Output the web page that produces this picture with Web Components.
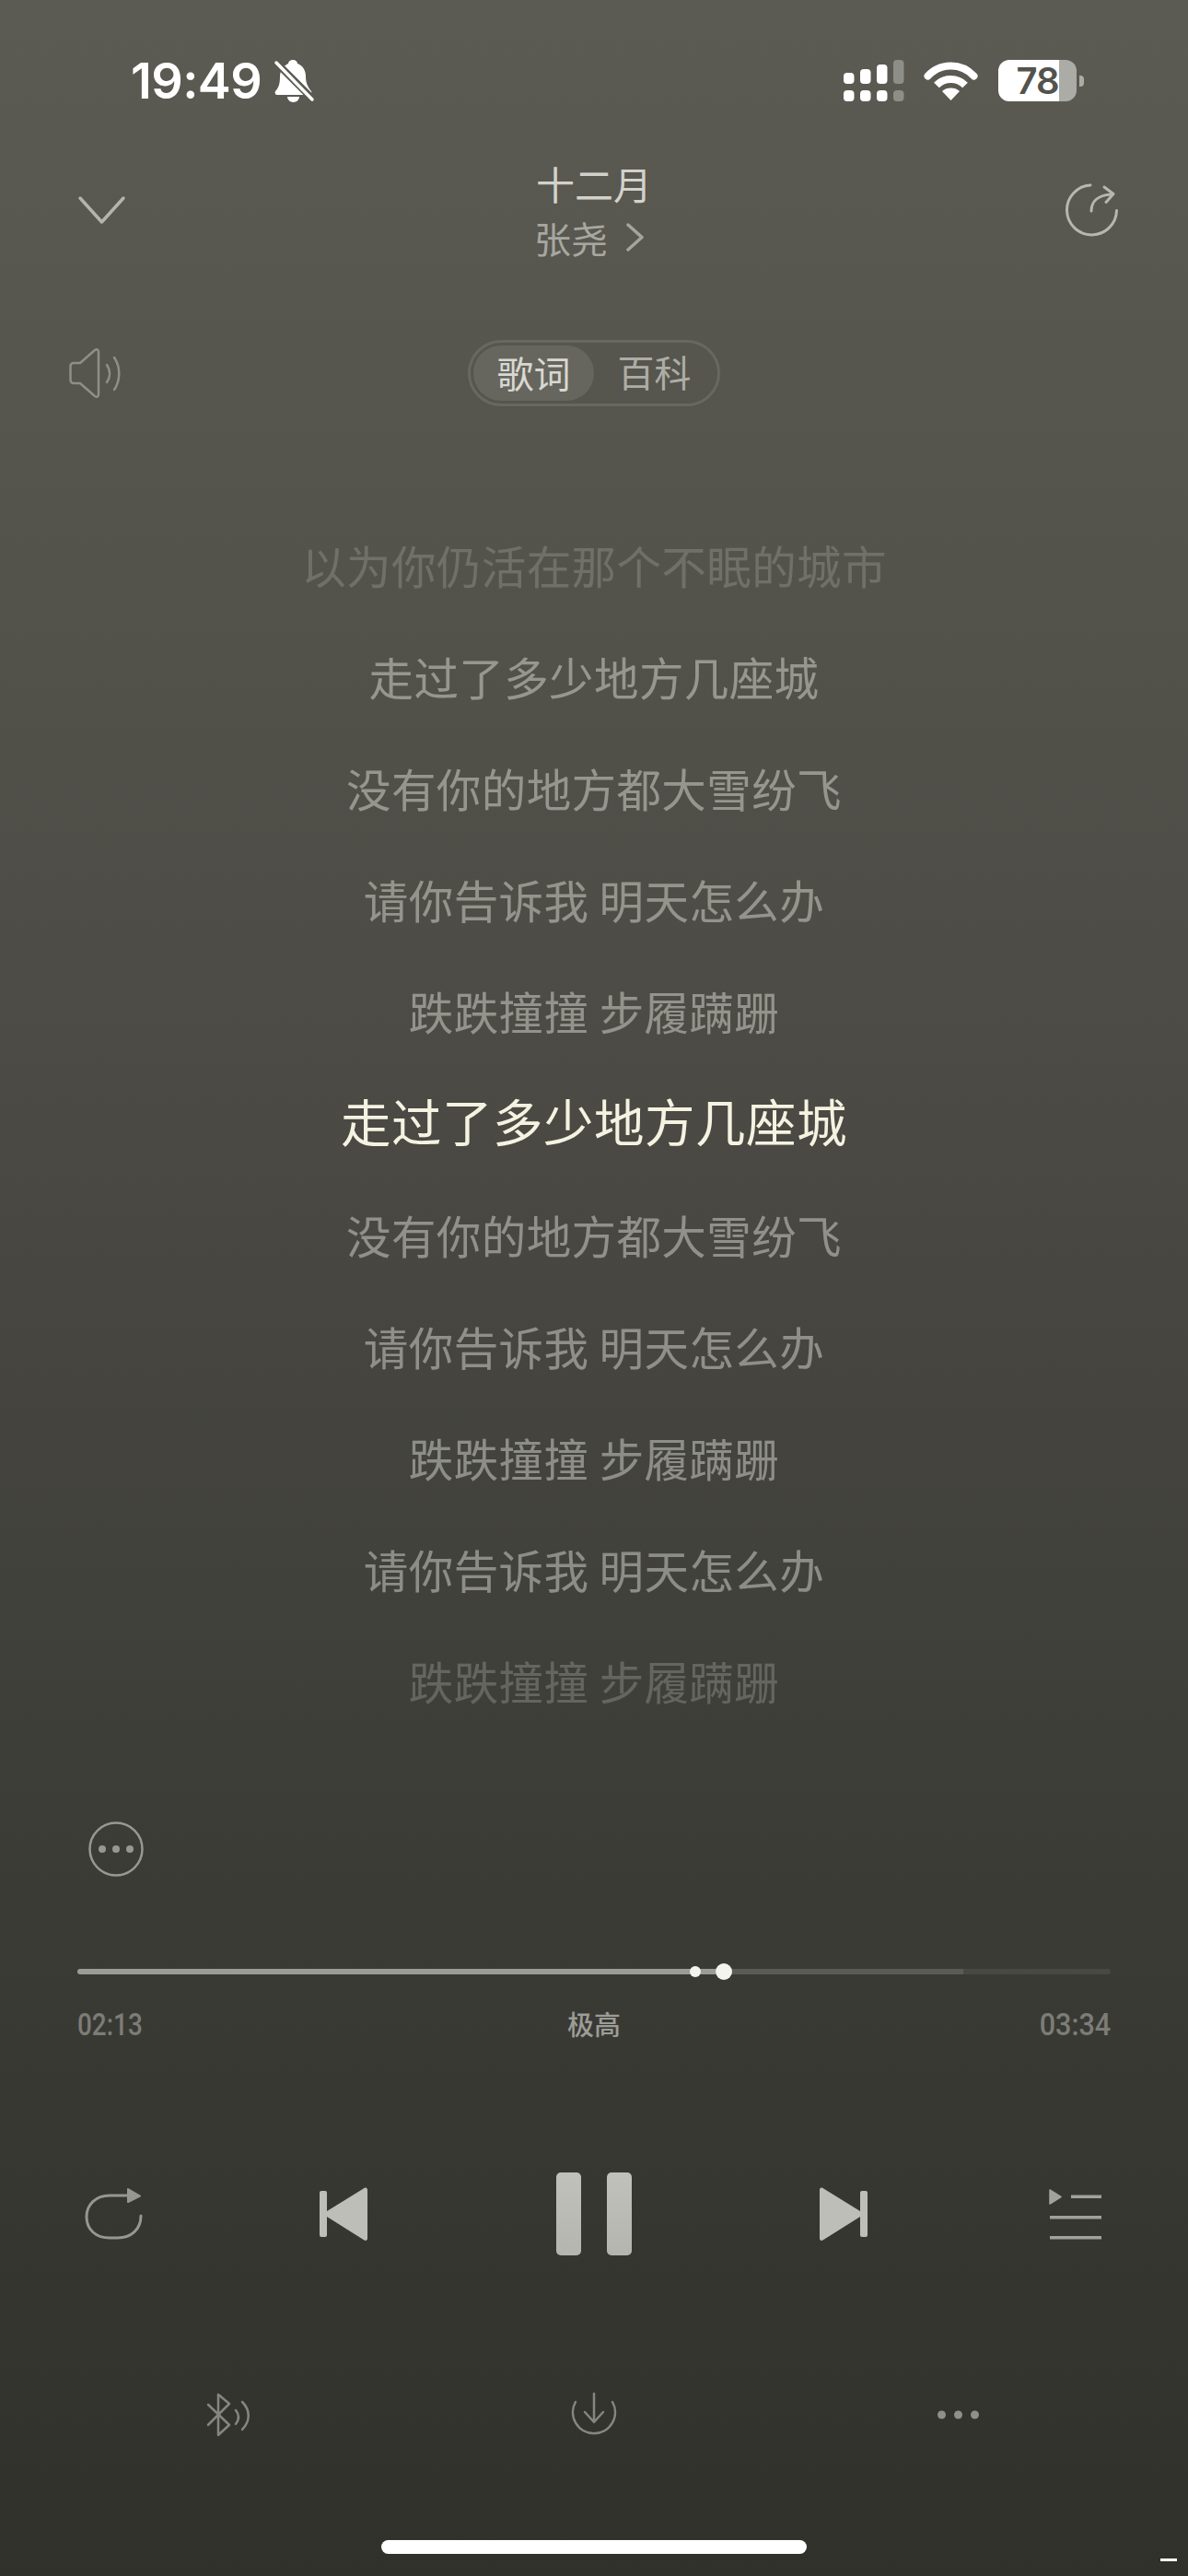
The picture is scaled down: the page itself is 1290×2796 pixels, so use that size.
<!doctype html>
<html lang="zh-CN">
  <head>
    <meta charset="UTF-8" />
    <meta name="viewport" content="width=device-width, initial-scale=1.0" />
    <title>十二月</title>
    <style>
      html, body { margin: 0; padding: 0; background: #31312c; }
    </style>
  </head>
  <body>

    <player-screen>
      <status-bar time="19:49" battery="78"></status-bar>
      <player-header title="十二月" artist="张尧"></player-header>
      <mode-switch></mode-switch>
      <lyric-list>
        <lyric-line tone="dim">以为你仍活在那个不眠的城市</lyric-line>
        <lyric-line>走过了多少地方几座城</lyric-line>
        <lyric-line>没有你的地方都大雪纷飞</lyric-line>
        <lyric-line>请你告诉我 明天怎么办</lyric-line>
        <lyric-line>跌跌撞撞 步履蹒跚</lyric-line>
        <lyric-line tone="active">走过了多少地方几座城</lyric-line>
        <lyric-line>没有你的地方都大雪纷飞</lyric-line>
        <lyric-line>请你告诉我 明天怎么办</lyric-line>
        <lyric-line>跌跌撞撞 步履蹒跚</lyric-line>
        <lyric-line>请你告诉我 明天怎么办</lyric-line>
        <lyric-line tone="faint">跌跌撞撞 步履蹒跚</lyric-line>
      </lyric-list>
      <more-button></more-button>
      <progress-bar current="02:13" total="03:34" quality="极高"></progress-bar>
      <transport-controls></transport-controls>
      <extra-actions></extra-actions>
      <home-indicator></home-indicator>
    </player-screen>

    <script>
      const CJK = '"Noto Sans CJK SC", "Noto Sans", sans-serif';

      // Inline svg paths, drawn at the size they have in the screenshot
      const ICONS = {
        bell: { w: 42, h: 46, svg: `
          <path fill="#fff" d="M20 0c3 0 5 2 5 4 6 2 9 8 9 14 0 7 2 11 6 16 1 2 0 4-2 4H3c-2 0-3-2-2-4 4-4 5-9 5-16 0-6 4-12 9-14 0-2 2-4 5-4z"/>
          <path fill="#fff" d="M14 40h13c0 3-3 6-6.500 6S14 43 14 40z"/>
          <path stroke="#5b5a52" stroke-width="8" d="M1 2l41 41"/>
          <path stroke="#fff" stroke-width="3.500" stroke-linecap="round" d="M2 3l39 40"/>` },
        signal: { w: 65, h: 45, svg: `
          <g fill="#fff">
            <rect x="0" y="14" width="11.500" height="12" rx="4"/>
            <rect x="18" y="10" width="11.500" height="16" rx="4"/>
            <rect x="36" y="5" width="11.500" height="21" rx="4"/>
            <rect x="0" y="33" width="11.500" height="12" rx="4"/>
            <rect x="18" y="33" width="11.500" height="12" rx="4"/>
            <rect x="36" y="33" width="11.500" height="12" rx="4"/>
          </g>
          <g fill="#8e8e88">
            <rect x="54" y="0" width="11.500" height="26" rx="4"/>
            <rect x="54" y="33" width="11.500" height="12" rx="4"/>
          </g>` },
        wifi: { w: 57, h: 42, svg: `
          <g fill="none" stroke="#fff" stroke-width="8" stroke-linecap="round">
            <path d="M3.500 15.500C10 8.500 19 4.500 28.500 4.500S47 8.500 53.500 15.500"/>
          </g>
          <path fill="none" stroke="#fff" stroke-width="8" d="M13 25.500C17 21.500 22.500 19 28.500 19S40 21.500 44 25.500"/>
          <path fill="#fff" d="M28.500 42L19 32c2.500-2.500 6-3.500 9.500-3.500s7 1 9.500 3.500z"/>` },
        chevronDown: { w: 51, h: 30, svg: `
          <path fill="none" stroke="#b4b4ad" stroke-width="3.500" stroke-linecap="round" stroke-linejoin="round" d="M2 2l23.500 26L49 2"/>` },
        chevronRight: { w: 19, h: 31, svg: `
          <path fill="none" stroke="#a5a59e" stroke-width="3.500" stroke-linecap="round" stroke-linejoin="round" d="M2 2l15 13.500L2 29"/>` },
        replay: { w: 58, h: 58, svg: `
          <g fill="none" stroke="#b7b7b0" stroke-width="3" stroke-linecap="round" stroke-linejoin="round">
            <path d="M28 2A27 27 0 1 0 56.500 29.500"/>
            <path d="M29 30C29 20 36 13 50 12"/>
            <path d="M43 4l10 7.500-8 9"/>
          </g>` },
        speaker: { w: 56, h: 54, svg: `
          <g fill="none" stroke="#8f8f88" stroke-width="2.500" stroke-linecap="round" stroke-linejoin="round">
            <path d="M5 16h7L28 2c2-1.500 4-1 4 2v46c0 3-2 3.500-4 2L12 38H5c-2 0-3.500-1.500-3.500-3.500V19.500C1.500 17.500 3 16 5 16z"/>
            <path d="M41 18c4 6 4 13 0 19"/>
            <path d="M49 10c7 10 7 25 0 35"/>
          </g>` },
        more: { w: 60, h: 60, svg: `
          <circle cx="30" cy="30" r="28.500" fill="none" stroke="#979892" stroke-width="2.500"/>
          <g fill="#979892"><circle cx="15" cy="30" r="4"/><circle cx="30" cy="30" r="4"/><circle cx="45" cy="30" r="4"/></g>` },
        repeat: { w: 62, h: 56, svg: `
          <path fill="none" stroke="#969791" stroke-width="3" stroke-linecap="round" d="M47 8H27C12 8 2 18 2 31c0 14 10 23 25 23h9c14 0 25-9 25-24"/>
          <path fill="#969791" stroke="#969791" stroke-width="2" stroke-linejoin="round" d="M47 1l13 7.500L47 15z"/>` },
        prev: { w: 52, h: 58, svg: `
          <g fill="#bdbeb8">
            <rect x="0" y="4" width="8" height="50" rx="2"/>
            <path d="M48.500 1L8 26c-2.500 1.500-2.500 4.500 0 6l40.500 25.500c2 1 3.500 0 3.500-2V3c0-2-1.500-3-3.500-2z"/>
          </g>` },
        next: { w: 52, h: 58, svg: `
          <g fill="#bdbeb8" transform="matrix(-1 0 0 1 52 0)">
            <rect x="0" y="4" width="8" height="50" rx="2"/>
            <path d="M48.500 1L8 26c-2.500 1.500-2.500 4.500 0 6l40.500 25.500c2 1 3.500 0 3.500-2V3c0-2-1.500-3-3.500-2z"/>
          </g>` },
        pause: { w: 82, h: 90, svg: `
          <defs><linearGradient id="p" x1="0" y1="0" x2="0" y2="1"><stop offset="0" stop-color="#c0c1bb"/><stop offset="1" stop-color="#b4b5af"/></linearGradient></defs>
          <rect x="0" y="0" width="27" height="90" rx="5" fill="url(#p)"/>
          <rect x="55" y="0" width="27" height="90" rx="5" fill="url(#p)"/>` },
        queue: { w: 57, h: 55, svg: `
          <path fill="#a1a29c" stroke="#a1a29c" stroke-width="1.500" stroke-linejoin="round" d="M1 1l12 7.500L1 16z"/>
          <g fill="#a1a29c">
            <rect x="24" y="6.500" width="33" height="3.500"/>
            <rect x="1" y="29" width="56" height="3.500"/>
            <rect x="1" y="51" width="56" height="3.500"/>
          </g>` },
        bluetooth: { w: 46, h: 46, svg: `
          <g fill="none" stroke="#85867f" stroke-width="2.500" stroke-linecap="round" stroke-linejoin="round">
            <path d="M1 12l23 22-12 11V1l12 10L1 34"/>
            <path d="M31 18c4 5 4 10 0 15"/>
            <path d="M38 9c9 9 9 21 0 30"/>
          </g>` },
        download: { w: 50, h: 47, svg: `
          <g fill="none" stroke="#85867f" stroke-width="2.500" stroke-linecap="round" stroke-linejoin="round">
            <path d="M5 10a23 23 0 1 0 40 0"/>
            <path d="M25 1v31M15 21l10 11 10-11"/>
          </g>` },
        dots: { w: 45, h: 10, svg: `
          <g fill="#8f908a"><circle cx="4.500" cy="5" r="4.500"/><circle cx="22.500" cy="5" r="4.500"/><circle cx="40.500" cy="5" r="4.500"/></g>` },
      };

      class AppIcon extends HTMLElement {
        connectedCallback() {
          const icon = ICONS[this.getAttribute('name')];
          const shadow = this.attachShadow({ mode: 'open' });
          shadow.innerHTML = `
            <style>
              :host { display: block; flex: none; line-height: 0; }
              svg { display: block; overflow: visible; }
            </style>
            <svg xmlns="http://www.w3.org/2000/svg" width="${icon.w}" height="${icon.h}" viewBox="0 0 ${icon.w} ${icon.h}">${icon.svg}</svg>`;
        }
      }
      customElements.define('app-icon', AppIcon);

      class PlayerScreen extends HTMLElement {
        constructor() {
          super();
          const shadow = this.attachShadow({ mode: 'open' });
          shadow.innerHTML = `
            <style>
              :host {
                display: flex;
                flex-direction: column;
                position: relative;
                width: 1290px;
                height: 2796px;
                overflow: hidden;
                background: linear-gradient(180deg, #5c5b53 0%, #4c4b45 40%, #3c3c37 72%, #31312c 100%);
                font-family: ${CJK};
              }
              .mark {
                position: absolute;
                right: 12px;
                bottom: 16px;
                width: 18px;
                height: 3px;
                background: #fff;
              }
            </style>
            <slot></slot>
            <div class="mark"></div>`;
        }
      }
      customElements.define('player-screen', PlayerScreen);

      class StatusBar extends HTMLElement {
        connectedCallback() {
          const shadow = this.attachShadow({ mode: 'open' });
          shadow.innerHTML = `
            <style>
              :host {
                display: flex;
                align-items: center;
                height: 47px;
                margin-top: 64px;
                padding: 0 113px 0 142px;
              }
              .time {
                font: 600 54px/47px Inter, "Liberation Sans", sans-serif;
                color: #fff;
                letter-spacing: -0.6px;
                margin-right: 14px;
              }
              .right { margin-left: auto; display: flex; align-items: center; }
              app-icon[name="wifi"] { margin: 0 23px; }
              .battery { display: flex; align-items: center; }
              .cell {
                width: 85px;
                height: 45px;
                border-radius: 12px;
                background: linear-gradient(90deg, #fff 0, #fff 66px, #abaca6 66px);
                color: #53534c;
                font: 600 40px/45px Inter, "Liberation Sans", sans-serif;
                text-align: center;
                letter-spacing: -1px;
              }
              .nub { width: 5px; height: 12px; margin-left: 3px; border-radius: 0 4px 4px 0; background: #abaca6; }
            </style>
            <span class="time">${this.getAttribute('time')}</span>
            <app-icon name="bell"></app-icon>
            <div class="right">
              <app-icon name="signal"></app-icon>
              <app-icon name="wifi"></app-icon>
              <div class="battery">
                <div class="cell">${this.getAttribute('battery')}</div>
                <div class="nub"></div>
              </div>
            </div>`;
        }
      }
      customElements.define('status-bar', StatusBar);

      class PlayerHeader extends HTMLElement {
        connectedCallback() {
          const shadow = this.attachShadow({ mode: 'open' });
          shadow.innerHTML = `
            <style>
              :host {
                display: grid;
                grid-template-columns: 1fr auto 1fr;
                align-items: center;
                height: 126px;
                margin-top: 54px;
                padding: 0 76px;
              }
              .meta { display: flex; flex-direction: column; align-items: center; margin-top: -3px; }
              .title { font-size: 42px; line-height: 62px; color: #d2d2cb; }
              .artist { display: flex; align-items: center; gap: 20px; margin-left: -11px; font-size: 40px; line-height: 56px; color: #a7a7a0; }
              app-icon[name="chevronDown"] { margin-left: 9px; }
              app-icon[name="replay"] { justify-self: end; }
            </style>
            <app-icon name="chevronDown"></app-icon>
            <div class="meta">
              <div class="title">${this.getAttribute('title')}</div>
              <div class="artist">${this.getAttribute('artist')}<app-icon name="chevronRight"></app-icon></div>
            </div>
            <app-icon name="replay"></app-icon>`;
        }
      }
      customElements.define('player-header', PlayerHeader);

      class ModeSwitch extends HTMLElement {
        constructor() {
          super();
          const shadow = this.attachShadow({ mode: 'open' });
          shadow.innerHTML = `
            <style>
              :host {
                display: grid;
                grid-template-columns: 1fr auto 1fr;
                align-items: center;
                height: 72px;
                margin-top: 78px;
                padding: 0 75px;
              }
              .pill {
                display: flex;
                box-sizing: border-box;
                width: 274px;
                height: 72px;
                padding: 3px;
                border: 3px solid #686861;
                border-radius: 36px;
              }
              .pill div { width: 132px; text-align: center; font-size: 40px; line-height: 56px; color: #adada6; }
              .pill .on { background: #66665e; border-radius: 30px; color: #d8d8d1; line-height: 58px; }
            </style>
            <app-icon name="speaker"></app-icon>
            <div class="pill"><div class="on">歌词</div><div>百科</div></div>`;
        }
      }
      customElements.define('mode-switch', ModeSwitch);

      class LyricList extends HTMLElement {
        constructor() {
          super();
          const shadow = this.attachShadow({ mode: 'open' });
          shadow.innerHTML = `
            <style>
              :host { display: flex; flex-direction: column; margin-top: 112px; height: 1334px; }
            </style>
            <slot></slot>`;
        }
      }
      customElements.define('lyric-list', LyricList);

      class LyricLine extends HTMLElement {
        constructor() {
          super();
          const shadow = this.attachShadow({ mode: 'open' });
          shadow.innerHTML = `
            <style>
              :host {
                display: block;
                height: 121.100px;
                line-height: 121.100px;
                text-align: center;
                font-size: 48.500px;
                font-weight: 400;
                letter-spacing: 0.4px;
                color: rgba(255, 255, 248, 0.4);
              }
              :host([tone="dim"]) { color: rgba(255, 255, 248, 0.17); }
              :host([tone="faint"]) { color: rgba(255, 255, 248, 0.2); }
              :host([tone="active"]) { font-size: 54.500px; font-weight: 400; letter-spacing: 0.5px; color: #f4f3e2; line-height: 116px; }
            </style>
            <slot></slot>`;
        }
      }
      customElements.define('lyric-line', LyricLine);

      class MoreButton extends HTMLElement {
        constructor() {
          super();
          const shadow = this.attachShadow({ mode: 'open' });
          shadow.innerHTML = `
            <style>
              :host { display: block; margin-top: 90px; padding-left: 96px; }
            </style>
            <app-icon name="more"></app-icon>`;
        }
      }
      customElements.define('more-button', MoreButton);

      class ProgressBar extends HTMLElement {
        connectedCallback() {
          const shadow = this.attachShadow({ mode: 'open' });
          shadow.innerHTML = `
            <style>
              :host { display: block; margin-top: 100px; padding: 0 84px; }
              .track {
                position: relative;
                height: 6px;
                border-radius: 3px;
                background: linear-gradient(90deg, #9b9c95 0, #9b9c95 693px, #5a5b55 693px, #5a5b55 962px, #484944 962px);
              }
              .tick, .knob { position: absolute; top: 50%; border-radius: 50%; background: #f4f4ee; transform: translate(-50%, -50%); }
              .tick { left: 671px; width: 12px; height: 12px; }
              .knob { left: 702px; width: 18px; height: 18px; }
              .labels {
                display: flex;
                justify-content: space-between;
                align-items: center;
                height: 28px;
                margin-top: 40px;
              }
              .num { display: inline-block; font: 500 34px/28px Roboto, "Liberation Sans", sans-serif; color: #7c7d77; }
              .num.l { transform: scaleX(0.82); transform-origin: left center; }
              .num.r { transform: scaleX(0.9); transform-origin: right center; }
              .q { font-size: 29px; font-weight: 500; line-height: 28px; margin-top: -2px; color: #9c9d96; }
            </style>
            <div class="track"><div class="tick"></div><div class="knob"></div></div>
            <div class="labels">
              <span class="num l">${this.getAttribute('current')}</span>
              <span class="q">${this.getAttribute('quality')}</span>
              <span class="num r">${this.getAttribute('total')}</span>
            </div>`;
        }
      }
      customElements.define('progress-bar', ProgressBar);

      class TransportControls extends HTMLElement {
        constructor() {
          super();
          const shadow = this.attachShadow({ mode: 'open' });
          shadow.innerHTML = `
            <style>
              :host {
                display: flex;
                align-items: center;
                height: 90px;
                margin-top: 147px;
                padding-left: 92px;
              }
              app-icon[name="prev"] { margin-left: 193px; }
              app-icon[name="pause"] { margin-left: 205px; }
              app-icon[name="next"] { margin-left: 204px; }
              app-icon[name="queue"] { margin-left: 197px; }
            </style>
            <app-icon name="repeat"></app-icon>
            <app-icon name="prev"></app-icon>
            <app-icon name="pause"></app-icon>
            <app-icon name="next"></app-icon>
            <app-icon name="queue"></app-icon>`;
        }
      }
      customElements.define('transport-controls', TransportControls);

      class ExtraActions extends HTMLElement {
        constructor() {
          super();
          const shadow = this.attachShadow({ mode: 'open' });
          shadow.innerHTML = `
            <style>
              :host {
                display: flex;
                align-items: center;
                height: 47px;
                margin-top: 149px;
                padding-left: 225px;
              }
              app-icon[name="download"] { margin-left: 349px; }
              app-icon[name="dots"] { margin-left: 348px; }
            </style>
            <app-icon name="bluetooth"></app-icon>
            <app-icon name="download"></app-icon>
            <app-icon name="dots"></app-icon>`;
        }
      }
      customElements.define('extra-actions', ExtraActions);

      class HomeIndicator extends HTMLElement {
        constructor() {
          super();
          const shadow = this.attachShadow({ mode: 'open' });
          shadow.innerHTML = `
            <style>
              :host {
                display: block;
                width: 462px;
                height: 15px;
                margin: 113px 0 0 414px;
                border-radius: 8px;
                background: #fff;
              }
            </style>`;
        }
      }
      customElements.define('home-indicator', HomeIndicator);
    </script>

  </body>
</html>
